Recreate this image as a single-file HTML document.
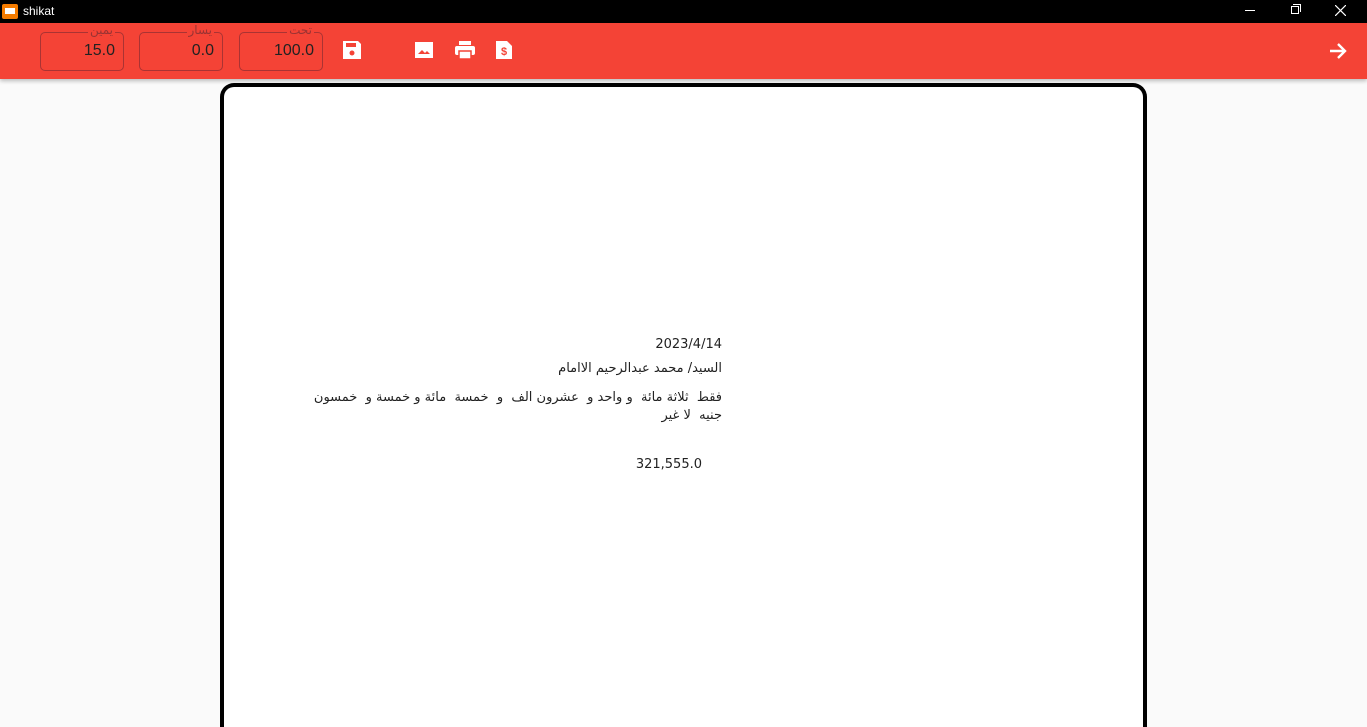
<!DOCTYPE html>
<html><head><meta charset="utf-8"><style>
*{margin:0;padding:0;box-sizing:border-box}
html,body{width:1367px;height:727px;overflow:hidden}
body{background:#fafafa;font-family:"Liberation Sans","DejaVu Sans",sans-serif;position:relative}
.title{position:absolute;left:0;top:0;width:1367px;height:23px;background:#000;color:#fff;font-size:12px}
.bar{position:absolute;left:0;top:23px;width:1367px;height:56px;background:#f44336;box-shadow:0 2px 4px rgba(0,0,0,.25);z-index:2}
.fld{position:absolute;top:9px;width:84px;height:39px;border:1px solid #a33;border-radius:5px;color:#222;font-size:16px;text-align:right;padding:9px 8px 0 0}
.fld span{position:absolute;top:-10px;right:8px;background:#f44336;padding:0 2px;font-size:12px;color:#933;font-family:"DejaVu Sans",sans-serif;line-height:14px}
.ic{position:absolute;top:17px}
.paper{position:absolute;left:220px;top:83px;width:927px;height:644px;background:#fff;border:4px solid #000;border-bottom:none;border-radius:14px 14px 0 0}
.t{position:absolute;font-family:"DejaVu Sans",sans-serif;font-size:13px;color:#222;direction:rtl;text-align:right;white-space:pre}
</style></head><body>
<div class="title">
<div style="position:absolute;left:2px;top:4px;width:16px;height:15px;background:#f57c00;border-radius:2px"><div style="position:absolute;left:3px;top:4px;width:10px;height:6px;background:#fff"></div></div>
<div style="position:absolute;left:23px;top:4px">shikat</div>
<div style="position:absolute;left:1245px;top:10px;width:10px;height:1px;background:#fff"></div>
<div style="position:absolute;left:1291px;top:6px;width:8px;height:8px;border:1px solid #fff"></div>
<div style="position:absolute;left:1293px;top:4px;width:8px;height:8px;border-top:1px solid #fff;border-right:1px solid #fff"></div>
<svg style="position:absolute;left:1335px;top:5px" width="11" height="11"><path d="M0 0L11 11M11 0L0 11" stroke="#fff" stroke-width="1.2"/></svg>
</div>
<div class="bar">
<div class="fld" style="left:40px"><span>يمين</span>15.0</div>
<div class="fld" style="left:139px"><span>يسار</span>0.0</div>
<div class="fld" style="left:239px"><span>تحت</span>100.0</div>
<svg class="ic" style="left:342px" width="20" height="20" viewBox="0 0 20 20"><path d="M1 1h15l3 3v15H1z" fill="#fff"/><rect x="4" y="3" width="10" height="4" fill="#f44336"/><circle cx="10" cy="13" r="2.5" fill="#f44336"/></svg>
<svg class="ic" style="left:414px" width="20" height="20" viewBox="0 0 20 20"><rect x="1" y="2" width="18" height="16" fill="#fff"/><path d="M4 14l4-4 3 3 2-2 3 3z" fill="#f44336"/></svg>
<svg class="ic" style="left:454px" width="22" height="20" viewBox="0 0 22 20"><rect x="5" y="1" width="12" height="4" fill="#fff"/><rect x="1" y="6" width="20" height="9" rx="2" fill="#fff"/><rect x="5" y="11" width="12" height="8" fill="#fff" stroke="#f44336" stroke-width="1.5"/></svg>
<svg class="ic" style="left:495px" width="18" height="20" viewBox="0 0 18 20"><path d="M1 1h11l5 5v13H1z" fill="#fff"/><text x="9" y="15" font-size="11" font-weight="bold" fill="#f44336" text-anchor="middle" font-family="Liberation Sans">$</text></svg>
<svg style="position:absolute;left:1328px;top:18px" width="20" height="20" viewBox="0 0 20 20"><path d="M2 10h15M10 3l7 7-7 7" stroke="#fff" stroke-width="2.4" fill="none"/></svg>
</div>
<div class="paper"></div>
<div class="t" style="right:645px;top:337px">2023/4/14</div>
<div class="t" style="right:645px;top:361px">السيد/ محمد عبدالرحيم الاامام</div>
<div class="t" style="right:645px;top:389px;line-height:18px">فقط  ثلاثة مائة  و واحد و  عشرون الف  و  خمسة  مائة و خمسة و  خمسون
جنيه  لا غير</div>
<div class="t" style="right:665px;top:457px;direction:ltr">321,555.0</div>
</body></html>
